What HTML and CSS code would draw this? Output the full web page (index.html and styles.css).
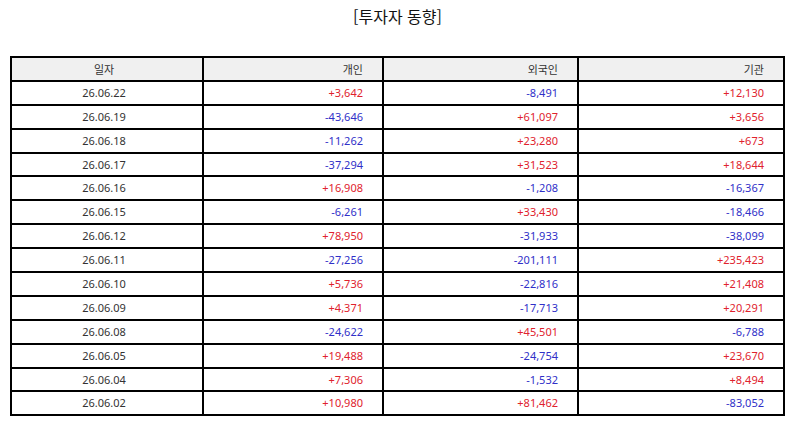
FILE: index.html
```html
<!DOCTYPE html>
<html lang="ko">
<head>
<meta charset="utf-8">
<link rel="stylesheet" href="styles.css">
</head>
<body>
<div class="page">
  <h1 class="title">[투자자 동향]</h1>
  <table class="grid">
    <colgroup>
      <col class="c1"><col class="c2"><col class="c3"><col class="c4">
    </colgroup>
    <thead>
      <tr><th class="center">일자</th><th>개인</th><th>외국인</th><th>기관</th></tr>
    </thead>
    <tbody>
      <tr><td class="center">26.06.22</td><td class="up">+3,642</td><td class="down">-8,491</td><td class="up">+12,130</td></tr>
      <tr><td class="center">26.06.19</td><td class="down">-43,646</td><td class="up">+61,097</td><td class="up">+3,656</td></tr>
      <tr><td class="center">26.06.18</td><td class="down">-11,262</td><td class="up">+23,280</td><td class="up">+673</td></tr>
      <tr><td class="center">26.06.17</td><td class="down">-37,294</td><td class="up">+31,523</td><td class="up">+18,644</td></tr>
      <tr><td class="center">26.06.16</td><td class="up">+16,908</td><td class="down">-1,208</td><td class="down">-16,367</td></tr>
      <tr><td class="center">26.06.15</td><td class="down">-6,261</td><td class="up">+33,430</td><td class="down">-18,466</td></tr>
      <tr><td class="center">26.06.12</td><td class="up">+78,950</td><td class="down">-31,933</td><td class="down">-38,099</td></tr>
      <tr><td class="center">26.06.11</td><td class="down">-27,256</td><td class="down">-201,111</td><td class="up">+235,423</td></tr>
      <tr><td class="center">26.06.10</td><td class="up">+5,736</td><td class="down">-22,816</td><td class="up">+21,408</td></tr>
      <tr><td class="center">26.06.09</td><td class="up">+4,371</td><td class="down">-17,713</td><td class="up">+20,291</td></tr>
      <tr><td class="center">26.06.08</td><td class="down">-24,622</td><td class="up">+45,501</td><td class="down">-6,788</td></tr>
      <tr><td class="center">26.06.05</td><td class="up">+19,488</td><td class="down">-24,754</td><td class="up">+23,670</td></tr>
      <tr><td class="center">26.06.04</td><td class="up">+7,306</td><td class="down">-1,532</td><td class="up">+8,494</td></tr>
      <tr><td class="center">26.06.02</td><td class="up">+10,980</td><td class="up">+81,462</td><td class="down">-83,052</td></tr>
    </tbody>
  </table>
</div>
</body>
</html>
```

FILE: styles.css
```css
html, body {
  margin: 0;
  padding: 0;
  background: #ffffff;
}

.page {
  padding: 0 9px 0 10px;
  font-family: "Noto Sans", "Noto Sans CJK KR", sans-serif;
  color: #333333;
}

.title {
  margin: 0;
  padding-top: 4px;
  height: 56px;
  box-sizing: border-box;
  text-align: center;
  font-size: 16px;
  font-weight: normal;
  line-height: 24px;
  color: #111111;
  font-family: "Noto Sans CJK KR", sans-serif;
}

.grid {
  width: 100%;
  border-collapse: collapse;
  table-layout: fixed;
  font-size: 11px;
}

.c1 { width: 192px; }
.c2 { width: 180px; }
.c3 { width: 195px; }
.c4 { width: auto; }

.grid th,
.grid td {
  border: 2px solid #000000;
  height: 23.9px;
  box-sizing: border-box;
  padding: 0 19px 0 6px;
  text-align: right;
  font-weight: normal;
  line-height: 14px;
  white-space: nowrap;
}

.grid th {
  background: #f0f0f0;
  font-family: "Noto Sans CJK KR", sans-serif;
  color: #333333;
}

.grid .center {
  text-align: center;
  padding: 0 6px 0 0;
}

.up { color: #e0222d; }
.down { color: #3030c8; }
```
